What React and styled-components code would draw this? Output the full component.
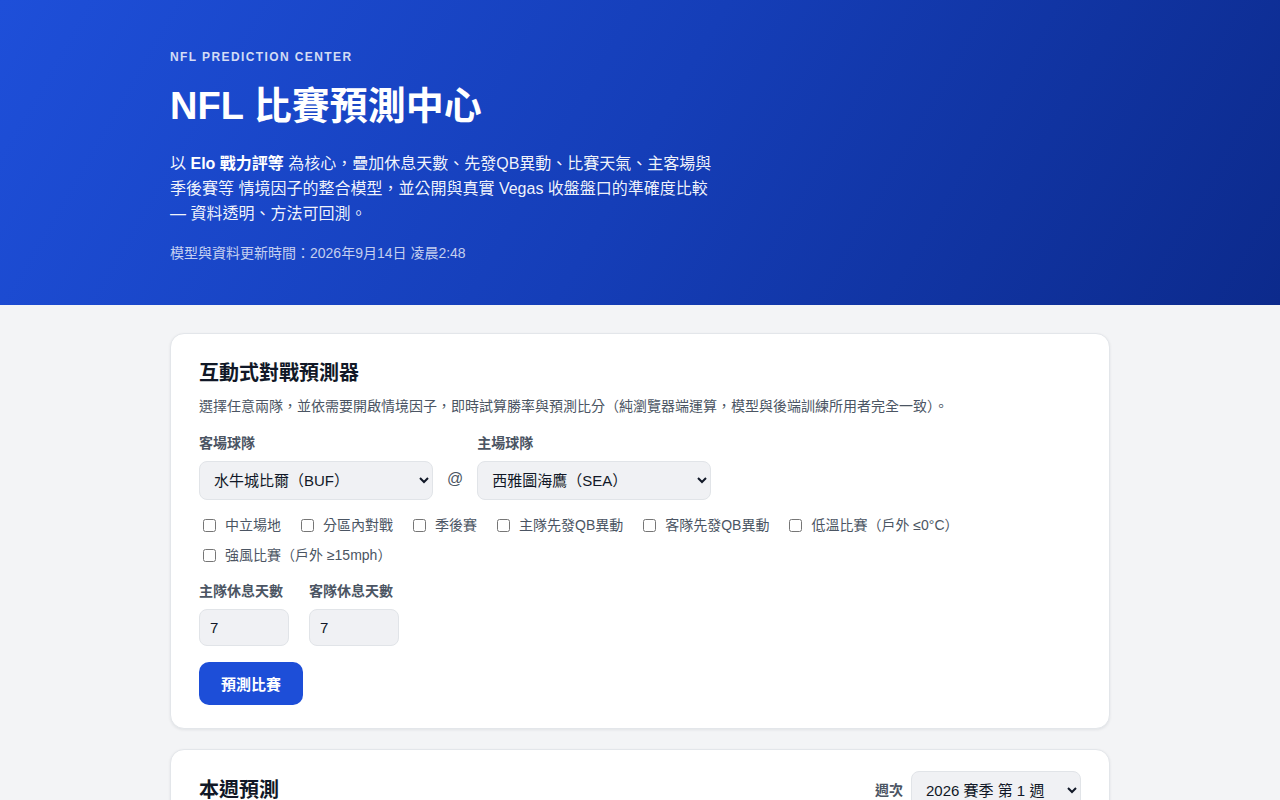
import styled, { createGlobalStyle } from "styled-components";
import { useState } from "react";

const GlobalStyle = createGlobalStyle`
  * { box-sizing: border-box; }
  body {
    margin: 0;
    background: #f3f4f6;
    font-family: "Liberation Sans", "Noto Sans CJK TC", sans-serif;
    color: #111827;
  }
`;

const sans = `"Liberation Sans", "Noto Sans CJK TC", sans-serif`;

const teams = [
  "水牛城比爾（BUF）",
  "西雅圖海鷹（SEA）",
  "堪薩斯城酋長（KC）",
  "費城老鷹（PHI）",
];

const factors = [
  "中立場地",
  "分區內對戰",
  "季後賽",
  "主隊先發QB異動",
  "客隊先發QB異動",
  "低溫比賽（戶外 ≤0°C）",
  "強風比賽（戶外 ≥15mph）",
];

const Hero = styled.header`
  background: linear-gradient(120deg, #1e4fd9 0%, #153eb8 50%, #0c2a8c 100%);
  color: #fff;
  height: 305px;
  padding-top: 50px;
`;

const Wrap = styled.div`
  width: 940px;
  margin: 0 auto;
`;

const Eyebrow = styled.div`
  font-size: 12px;
  font-weight: 700;
  letter-spacing: 1.4px;
  color: rgba(255, 255, 255, 0.82);
`;

const HeroTitle = styled.h1`
  margin: 18px 0 21px;
  font-size: 38px;
  line-height: 48px;
  font-weight: 700;
`;

const Lead = styled.p`
  margin: 0;
  max-width: 548px;
  font-size: 16px;
  line-height: 25px;
  color: rgba(255, 255, 255, 0.94);
  b { font-weight: 700; color: #fff; }
`;

const Updated = styled.p`
  margin: 16px 0 0;
  font-size: 14px;
  color: rgba(255, 255, 255, 0.75);
`;

const Main = styled(Wrap)`
  padding-top: 28px;
  display: flex;
  flex-direction: column;
  gap: 20px;
`;

const Card = styled.section`
  background: #fff;
  border: 1px solid #e3e6ea;
  border-radius: 14px;
  box-shadow: 0 1px 3px rgba(15, 23, 42, 0.08);
  padding: ${(p) => p.$top || 24}px 28px 23px;
`;

const CardHead = styled.div`
  display: flex;
  align-items: center;
  justify-content: space-between;
`;

const CardTitle = styled.h2`
  margin: 0;
  font-size: 20px;
  line-height: 30px;
  font-weight: 700;
  color: #111827;
`;

const Hint = styled.p`
  margin: 8px 0 0;
  font-size: 14px;
  line-height: 20px;
  color: #4b5563;
`;

const MatchRow = styled.div`
  display: flex;
  align-items: flex-end;
  gap: 14px;
  margin-top: 18px;
`;

const Field = styled.label`
  display: flex;
  flex-direction: column;
  gap: 9px;
`;

const FieldLabel = styled.span`
  font-size: 14px;
  line-height: 18px;
  font-weight: 700;
  color: #4b5563;
`;

const Select = styled.select`
  width: ${(p) => p.$w || 234}px;
  height: ${(p) => p.$h || 39}px;
  padding: 0 10px;
  font-family: ${sans};
  font-size: 15px;
  color: #111827;
  background: #f0f1f4;
  border: 1px solid #e1e4e8;
  border-radius: 8px;
`;

const At = styled.span`
  font-size: 16px;
  color: #4b5563;
  line-height: 39px;
  height: 39px;
  margin-bottom: 2px;
`;

const Factors = styled.div`
  display: flex;
  flex-wrap: wrap;
  column-gap: 16px;
  row-gap: 10px;
  margin-top: 15px;
`;

const Check = styled.label`
  display: flex;
  align-items: center;
  gap: 6px;
  font-size: 14px;
  line-height: 20px;
  color: #4b5563;
  input { margin: 0 3px 0 4px; width: 13px; height: 13px; }
`;

const RestRow = styled.div`
  display: flex;
  gap: 20px;
  margin-top: 17px;
`;

const NumInput = styled.input`
  width: 90px;
  height: 37px;
  padding: 0 10px;
  font-family: ${sans};
  font-size: 15px;
  color: #111827;
  background: #f0f1f4;
  border: 1px solid #e1e4e8;
  border-radius: 8px;
`;

const PredictButton = styled.button`
  margin-top: 16px;
  height: 43px;
  padding: 0 22px;
  border: none;
  border-radius: 10px;
  background: #1d4ed8;
  color: #fff;
  font-family: ${sans};
  font-size: 15px;
  font-weight: 700;
  cursor: pointer;
`;

const WeekPick = styled.div`
  display: flex;
  align-items: center;
  gap: 8px;
`;

const Placeholder = styled.div`
  height: 300px;
`;

export default function App() {
  const [away, setAway] = useState(teams[0]);
  const [home, setHome] = useState(teams[1]);
  const [homeRest, setHomeRest] = useState(7);
  const [awayRest, setAwayRest] = useState(7);

  return (
    <>
      <GlobalStyle />
      <Hero>
        <Wrap>
          <Eyebrow>NFL PREDICTION CENTER</Eyebrow>
          <HeroTitle>NFL 比賽預測中心</HeroTitle>
          <Lead>
            以 <b>Elo 戰力評等</b> 為核心，疊加休息天數、先發QB異動、比賽天氣、主客場與季後賽等
            情境因子的整合模型，並公開與真實 Vegas 收盤盤口的準確度比較 — 資料透明、方法可回測。
          </Lead>
          <Updated>模型與資料更新時間：2026年9月14日 凌晨2:48</Updated>
        </Wrap>
      </Hero>
      <Main>
        <Card>
          <CardTitle>互動式對戰預測器</CardTitle>
          <Hint>
            選擇任意兩隊，並依需要開啟情境因子，即時試算勝率與預測比分（純瀏覽器端運算，模型與後端訓練所用者完全一致）。
          </Hint>
          <MatchRow>
            <Field>
              <FieldLabel>客場球隊</FieldLabel>
              <Select value={away} onChange={(e) => setAway(e.target.value)}>
                {teams.map((t) => <option key={t}>{t}</option>)}
              </Select>
            </Field>
            <At>@</At>
            <Field>
              <FieldLabel>主場球隊</FieldLabel>
              <Select value={home} onChange={(e) => setHome(e.target.value)}>
                {teams.map((t) => <option key={t}>{t}</option>)}
              </Select>
            </Field>
          </MatchRow>
          <Factors>
            {factors.map((f) => (
              <Check key={f}>
                <input type="checkbox" />
                {f}
              </Check>
            ))}
          </Factors>
          <RestRow>
            <Field>
              <FieldLabel>主隊休息天數</FieldLabel>
              <NumInput type="text" value={homeRest} onChange={(e) => setHomeRest(e.target.value)} />
            </Field>
            <Field>
              <FieldLabel>客隊休息天數</FieldLabel>
              <NumInput type="text" value={awayRest} onChange={(e) => setAwayRest(e.target.value)} />
            </Field>
          </RestRow>
          <PredictButton>預測比賽</PredictButton>
        </Card>
        <Card $top={21}>
          <CardHead>
            <CardTitle>本週預測</CardTitle>
            <WeekPick>
              <FieldLabel>週次</FieldLabel>
              <Select $w={170} $h={38} defaultValue="w1">
                <option value="w1">2026 賽季 第 1 週</option>
                <option value="w2">2026 賽季 第 2 週</option>
              </Select>
            </WeekPick>
          </CardHead>
          <Placeholder />
        </Card>
      </Main>
    </>
  );
}
